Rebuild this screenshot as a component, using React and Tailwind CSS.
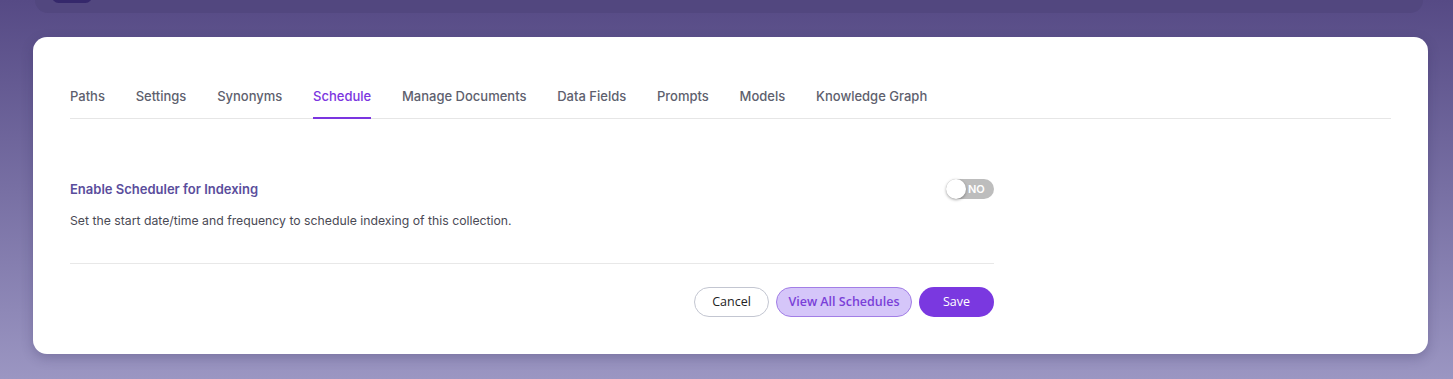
const tabs = ['Paths', 'Settings', 'Synonyms', 'Schedule', 'Manage Documents', 'Data Fields', 'Prompts', 'Models', 'Knowledge Graph'];

export default function App() {
    const active = 'Schedule';

    return (
        <div
            className="min-h-[379px] w-full bg-gradient-to-b from-[#564a85] to-[#9b96c2] relative overflow-hidden"
            style={{ fontFamily: 'Inter, "Noto Sans", sans-serif' }}
        >
            {/* Top header strip (cut off) */}
            <div className="h-[13px] mx-[35px] w-[1388px] bg-[#52477f] rounded-b-[20px] relative">
                <div className="absolute left-[17px] -top-[10px] w-[40px] h-[13px] rounded-full bg-[#35286b]"></div>
            </div>

            {/* Card */}
            <div className="mt-[24px] ml-[33px] w-[1395px] bg-white rounded-[14px] shadow-[0_4px_12px_rgba(40,30,80,0.25)] px-[37px] pt-[49px] pb-[37px]">
                {/* Tabs */}
                <div className="flex gap-[30.75px] border-b border-[#e6e6e6]">
                    {tabs.map((tab) => (
                        <div
                            key={tab}
                            className={`pb-[11px] text-[13px] leading-[20px] font-medium -mb-px border-b-2 ${
                                tab === active
                                    ? 'text-[#7b35e0] border-[#7b35e0]'
                                    : 'text-[#5e5f6e] border-transparent'
                            }`}
                        >
                            {tab}
                        </div>
                    ))}
                </div>

                {/* Schedule content */}
                <div className="w-[924px]">
                    <div className="mt-[60px] flex items-center justify-between h-[20px]">
                        <h3 className="text-[13px] font-semibold text-[#5a4d9c] translate-y-px">Enable Scheduler for Indexing</h3>
                        <button className="relative w-[48px] h-[20px] rounded-full bg-[#bdbdbd] flex items-center">
                            <span className="absolute left-0 top-0 w-[20px] h-[20px] rounded-full bg-white shadow-[0_1px_3px_rgba(0,0,0,0.35)]"></span>
                            <span className="ml-[22px] text-[11px] font-semibold text-white">NO</span>
                        </button>
                    </div>
                    <p className="mt-[14px] text-[12.25px] leading-[16px] text-[#4a4a55]">
                        Set the start date/time and frequency to schedule indexing of this collection.
                    </p>

                    <div className="mt-[34px] border-t border-[#e8e8e8]"></div>

                    <div
                        className="mt-[23px] flex justify-end gap-[7px] text-[12.5px]"
                        style={{ fontFamily: '"Open Sans", "Noto Sans", sans-serif' }}
                    >
                        <button className="h-[30px] w-[75px] rounded-full border border-[#c3c6d1] bg-white text-[#222] font-medium">
                            Cancel
                        </button>
                        <button className="h-[30px] w-[136px] rounded-full border border-[#a27ee6] bg-[#d5c6f9] text-[#7a3fd8] font-semibold">
                            View All Schedules
                        </button>
                        <button className="h-[30px] w-[75px] rounded-full bg-[#7a38e0] text-white font-medium">
                            Save
                        </button>
                    </div>
                </div>
            </div>
        </div>
    );
}
